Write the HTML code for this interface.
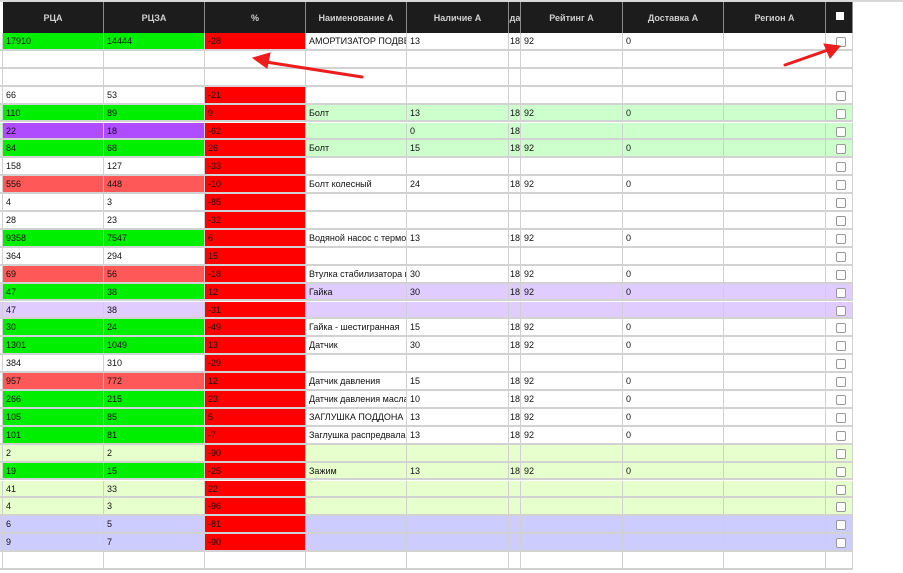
<!DOCTYPE html>
<html><head><meta charset="utf-8"><style>
*{box-sizing:border-box;margin:0;padding:0}
body{width:903px;height:573px;background:#fff;position:relative;overflow:hidden;font-family:"Liberation Sans","DejaVu Sans",sans-serif;font-size:9px;color:#111}
.hd{position:absolute;left:0;top:0;width:853px;height:33px;border-top:2px solid #d8d8d8;display:flex;background:#fff}
.topl{position:absolute;left:853px;top:0;width:50px;height:2px;background:#d8d8d8}
.hd b{background:#1c1c1c;color:#cfcfcf;font-size:9px;font-weight:bold;display:flex;align-items:center;justify-content:center;border-right:1px solid #8a8a8a;overflow:hidden;white-space:nowrap;height:31px}
.row{position:absolute;left:0;width:853px;height:17.9px;display:flex;border-bottom:2px solid #d2d2d2;background:#fff}
.row b{font-weight:normal;height:100%;border-right:1px solid #d0d0d0;padding-left:3px;line-height:16px;white-space:nowrap;overflow:hidden}
.row b:first-child{padding:0}
.c0{width:3px;flex:none}.c1,.c2,.c3,.c4{width:101px;flex:none}.c5{width:102px;flex:none}.c6{width:12px;flex:none;padding-left:1px!important}.c7{width:102px;flex:none}.c8{width:101px;flex:none}.c9{width:102px;flex:none}.c10{width:27px;flex:none;position:relative}
.g{background:#00ee00}.p{background:#b04cff}.s{background:#ff5858}.r{background:#ff0000}
.lg{background:#ccffcc}.lv{background:#e0ccff}.ly{background:#e6ffcc}.pw{background:#ccccff}
.cb::after{content:"";position:absolute;left:10px;top:4px;width:8px;height:8px;border:1px solid #999;border-radius:2px;background:#fff}
.hcb{position:absolute;left:836px;top:12px;width:8px;height:8px;background:#fff}
</style></head><body>
<div class="topl"></div>
<div class="hd"><b class="c0" style="background:#fff;border:none"></b><b class="c1">РЦА</b><b class="c2">РЦЗА</b><b class="c3">%</b><b class="c4">Наименование А</b><b class="c5">Наличие А</b><b class="c6">да</b><b class="c7">Рейтинг А</b><b class="c8">Доставка А</b><b class="c9">Регион А</b><b class="c10"></b></div>
<div class="hcb"></div>

<div class="row" style="top:33px"><b class="c0"></b><b class="c1 g">17910</b><b class="c2 g">14444</b><b class="c3 r">-28</b><b class="c4">АМОРТИЗАТОР ПОДВЕСКИ</b><b class="c5">13</b><b class="c6">18</b><b class="c7">92</b><b class="c8">0</b><b class="c9"></b><b class="c10 cb"></b></div>
<div class="row" style="top:50.9px"><b class="c0"></b><b class="c1"></b><b class="c2"></b><b class="c3"></b><b class="c4"></b><b class="c5"></b><b class="c6"></b><b class="c7"></b><b class="c8"></b><b class="c9"></b><b class="c10"></b></div>
<div class="row" style="top:68.8px"><b class="c0"></b><b class="c1"></b><b class="c2"></b><b class="c3"></b><b class="c4"></b><b class="c5"></b><b class="c6"></b><b class="c7"></b><b class="c8"></b><b class="c9"></b><b class="c10"></b></div>
<div class="row" style="top:86.7px"><b class="c0"></b><b class="c1">66</b><b class="c2">53</b><b class="c3 r">-21</b><b class="c4"></b><b class="c5"></b><b class="c6"></b><b class="c7"></b><b class="c8"></b><b class="c9"></b><b class="c10 cb"></b></div>
<div class="row lg" style="top:104.6px"><b class="c0"></b><b class="c1 g">110</b><b class="c2 g">89</b><b class="c3 r">9</b><b class="c4">Болт</b><b class="c5">13</b><b class="c6">18</b><b class="c7">92</b><b class="c8">0</b><b class="c9"></b><b class="c10 cb"></b></div>
<div class="row lg" style="top:122.5px"><b class="c0"></b><b class="c1 p">22</b><b class="c2 p">18</b><b class="c3 r">-62</b><b class="c4"></b><b class="c5">0</b><b class="c6">18</b><b class="c7"></b><b class="c8"></b><b class="c9"></b><b class="c10 cb"></b></div>
<div class="row lg" style="top:140.4px"><b class="c0"></b><b class="c1 g">84</b><b class="c2 g">68</b><b class="c3 r">26</b><b class="c4">Болт</b><b class="c5">15</b><b class="c6">18</b><b class="c7">92</b><b class="c8">0</b><b class="c9"></b><b class="c10 cb"></b></div>
<div class="row" style="top:158.3px"><b class="c0"></b><b class="c1">158</b><b class="c2">127</b><b class="c3 r">-33</b><b class="c4"></b><b class="c5"></b><b class="c6"></b><b class="c7"></b><b class="c8"></b><b class="c9"></b><b class="c10 cb"></b></div>
<div class="row" style="top:176.2px"><b class="c0"></b><b class="c1 s">556</b><b class="c2 s">448</b><b class="c3 r">-10</b><b class="c4">Болт колесный</b><b class="c5">24</b><b class="c6">18</b><b class="c7">92</b><b class="c8">0</b><b class="c9"></b><b class="c10 cb"></b></div>
<div class="row" style="top:194.1px"><b class="c0"></b><b class="c1">4</b><b class="c2">3</b><b class="c3 r">-85</b><b class="c4"></b><b class="c5"></b><b class="c6"></b><b class="c7"></b><b class="c8"></b><b class="c9"></b><b class="c10 cb"></b></div>
<div class="row" style="top:212px"><b class="c0"></b><b class="c1">28</b><b class="c2">23</b><b class="c3 r">-32</b><b class="c4"></b><b class="c5"></b><b class="c6"></b><b class="c7"></b><b class="c8"></b><b class="c9"></b><b class="c10 cb"></b></div>
<div class="row" style="top:229.9px"><b class="c0"></b><b class="c1 g">9358</b><b class="c2 g">7547</b><b class="c3 r">6</b><b class="c4">Водяной насос с термостатом</b><b class="c5">13</b><b class="c6">18</b><b class="c7">92</b><b class="c8">0</b><b class="c9"></b><b class="c10 cb"></b></div>
<div class="row" style="top:247.8px"><b class="c0"></b><b class="c1">364</b><b class="c2">294</b><b class="c3 r">15</b><b class="c4"></b><b class="c5"></b><b class="c6"></b><b class="c7"></b><b class="c8"></b><b class="c9"></b><b class="c10 cb"></b></div>
<div class="row" style="top:265.7px"><b class="c0"></b><b class="c1 s">69</b><b class="c2 s">56</b><b class="c3 r">-18</b><b class="c4">Втулка стабилизатора перед</b><b class="c5">30</b><b class="c6">18</b><b class="c7">92</b><b class="c8">0</b><b class="c9"></b><b class="c10 cb"></b></div>
<div class="row lv" style="top:283.6px"><b class="c0"></b><b class="c1 g">47</b><b class="c2 g">38</b><b class="c3 r">12</b><b class="c4">Гайка</b><b class="c5">30</b><b class="c6">18</b><b class="c7">92</b><b class="c8">0</b><b class="c9"></b><b class="c10 cb"></b></div>
<div class="row lv" style="top:301.5px"><b class="c0"></b><b class="c1">47</b><b class="c2">38</b><b class="c3 r">-31</b><b class="c4"></b><b class="c5"></b><b class="c6"></b><b class="c7"></b><b class="c8"></b><b class="c9"></b><b class="c10 cb"></b></div>
<div class="row" style="top:319.4px"><b class="c0"></b><b class="c1 g">30</b><b class="c2 g">24</b><b class="c3 r">-49</b><b class="c4">Гайка - шестигранная</b><b class="c5">15</b><b class="c6">18</b><b class="c7">92</b><b class="c8">0</b><b class="c9"></b><b class="c10 cb"></b></div>
<div class="row" style="top:337.3px"><b class="c0"></b><b class="c1 g">1301</b><b class="c2 g">1049</b><b class="c3 r">13</b><b class="c4">Датчик</b><b class="c5">30</b><b class="c6">18</b><b class="c7">92</b><b class="c8">0</b><b class="c9"></b><b class="c10 cb"></b></div>
<div class="row" style="top:355.2px"><b class="c0"></b><b class="c1">384</b><b class="c2">310</b><b class="c3 r">-29</b><b class="c4"></b><b class="c5"></b><b class="c6"></b><b class="c7"></b><b class="c8"></b><b class="c9"></b><b class="c10 cb"></b></div>
<div class="row" style="top:373.1px"><b class="c0"></b><b class="c1 s">957</b><b class="c2 s">772</b><b class="c3 r">12</b><b class="c4">Датчик давления</b><b class="c5">15</b><b class="c6">18</b><b class="c7">92</b><b class="c8">0</b><b class="c9"></b><b class="c10 cb"></b></div>
<div class="row" style="top:391px"><b class="c0"></b><b class="c1 g">266</b><b class="c2 g">215</b><b class="c3 r">23</b><b class="c4">Датчик давления масла</b><b class="c5">10</b><b class="c6">18</b><b class="c7">92</b><b class="c8">0</b><b class="c9"></b><b class="c10 cb"></b></div>
<div class="row" style="top:408.9px"><b class="c0"></b><b class="c1 g">105</b><b class="c2 g">85</b><b class="c3 r">5</b><b class="c4">ЗАГЛУШКА ПОДДОНА МАСЛ</b><b class="c5">13</b><b class="c6">18</b><b class="c7">92</b><b class="c8">0</b><b class="c9"></b><b class="c10 cb"></b></div>
<div class="row" style="top:426.8px"><b class="c0"></b><b class="c1 g">101</b><b class="c2 g">81</b><b class="c3 r">-7</b><b class="c4">Заглушка распредвала VAG</b><b class="c5">13</b><b class="c6">18</b><b class="c7">92</b><b class="c8">0</b><b class="c9"></b><b class="c10 cb"></b></div>
<div class="row ly" style="top:444.7px"><b class="c0"></b><b class="c1">2</b><b class="c2">2</b><b class="c3 r">-90</b><b class="c4"></b><b class="c5"></b><b class="c6"></b><b class="c7"></b><b class="c8"></b><b class="c9"></b><b class="c10 cb"></b></div>
<div class="row ly" style="top:462.6px"><b class="c0"></b><b class="c1 g">19</b><b class="c2 g">15</b><b class="c3 r">-25</b><b class="c4">Зажим</b><b class="c5">13</b><b class="c6">18</b><b class="c7">92</b><b class="c8">0</b><b class="c9"></b><b class="c10 cb"></b></div>
<div class="row ly" style="top:480.5px"><b class="c0"></b><b class="c1">41</b><b class="c2">33</b><b class="c3 r">22</b><b class="c4"></b><b class="c5"></b><b class="c6"></b><b class="c7"></b><b class="c8"></b><b class="c9"></b><b class="c10 cb"></b></div>
<div class="row ly" style="top:498.4px"><b class="c0"></b><b class="c1">4</b><b class="c2">3</b><b class="c3 r">-96</b><b class="c4"></b><b class="c5"></b><b class="c6"></b><b class="c7"></b><b class="c8"></b><b class="c9"></b><b class="c10 cb"></b></div>
<div class="row pw" style="top:516.3px"><b class="c0"></b><b class="c1">6</b><b class="c2">5</b><b class="c3 r">-81</b><b class="c4"></b><b class="c5"></b><b class="c6"></b><b class="c7"></b><b class="c8"></b><b class="c9"></b><b class="c10 cb"></b></div>
<div class="row pw" style="top:534.2px"><b class="c0"></b><b class="c1">9</b><b class="c2">7</b><b class="c3 r">-90</b><b class="c4"></b><b class="c5"></b><b class="c6"></b><b class="c7"></b><b class="c8"></b><b class="c9"></b><b class="c10 cb"></b></div>
<div class="row" style="top:552.1px"><b class="c0"></b><b class="c1"></b><b class="c2"></b><b class="c3"></b><b class="c4"></b><b class="c5"></b><b class="c6"></b><b class="c7"></b><b class="c8"></b><b class="c9"></b><b class="c10"></b></div>

<svg width="903" height="573" style="position:absolute;left:0;top:0" viewBox="0 0 903 573">
<g stroke="#ee1c1c" stroke-width="3" stroke-linecap="round" fill="#ee1c1c">
<line x1="362" y1="77" x2="266" y2="62"/>
<polygon points="253,58 270,53 267,68" stroke-width="1"/>
<line x1="785" y1="65" x2="828" y2="50"/>
<polygon points="840,46 824,44 830,58" stroke-width="1"/>
</g>
</svg>
</body></html>
